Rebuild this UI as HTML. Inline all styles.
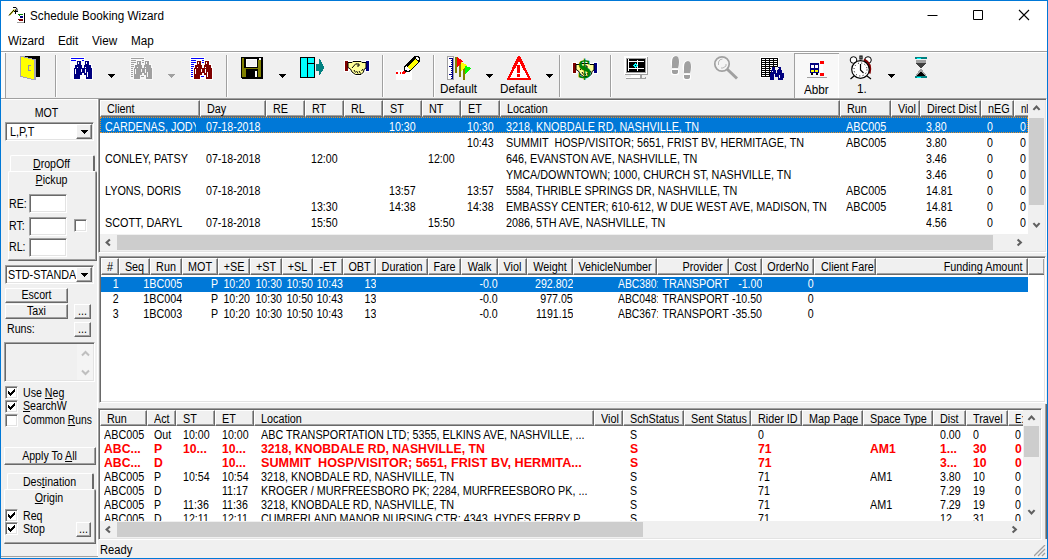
<!DOCTYPE html><html><head><meta charset="utf-8"><title>Schedule Booking Wizard</title><style>
*{box-sizing:border-box;margin:0;padding:0}
html,body{width:1048px;height:559px;overflow:hidden;background:#f0f0f0}
body{font-family:"Liberation Sans",sans-serif;font-size:11px;color:#000;position:relative;line-height:13px}
.abs,.abs>*{position:absolute}
div,span,svg{position:absolute}
.t{white-space:pre;height:13px;line-height:13px;font-size:12px;transform:scaleX(.885);transform-origin:0 0}
.t.k{transform:scaleX(.9)}
.t.red{transform:scaleX(1.02)}
.t.h{transform:scaleX(.9)}
.t.r{transform-origin:100% 0}
.t.c{transform-origin:50% 0}
.r{text-align:right}
.c{text-align:center}
.hd{background:#f0f0f0;border-top:1px solid #fff;border-left:1px solid #fff;border-right:1px solid #696969;border-bottom:1px solid #696969;box-shadow:inset -1px -1px 0 #a0a0a0;overflow:hidden;white-space:pre}
.hd i{position:absolute;font-style:normal;top:1px;left:5px;line-height:13px}
.fg{background:#f0f0f0;border-top:1px solid #fff;border-left:1px solid #fff;border-right:1px solid #696969;border-bottom:1px solid #696969;overflow:hidden;white-space:pre;box-shadow:inset -1px -1px 0 #a0a0a0}
.sel{background:#0078d7}
.w{color:#fff}
.red{color:#f00;font-weight:bold}
.btn{background:#f0f0f0;border-top:1px solid #fff;border-left:1px solid #fff;border-right:1px solid #696969;border-bottom:1px solid #696969;box-shadow:inset -1px -1px 0 #a0a0a0;text-align:center;white-space:pre}
.sunk{background:#fff;border-top:1px solid #a0a0a0;border-left:1px solid #a0a0a0;border-right:1px solid #fff;border-bottom:1px solid #fff;box-shadow:inset 1px 1px 0 #696969, inset -1px -1px 0 #e3e3e3}
.cb{background:#fff;border-top:1px solid #a0a0a0;border-left:1px solid #a0a0a0;border-right:1px solid #fff;border-bottom:1px solid #fff;box-shadow:inset 1px 1px 0 #696969, inset -1px -1px 0 #e3e3e3;width:13px;height:13px}
u{text-decoration:underline;text-underline-offset:1px}
.seg{font-size:12px;line-height:16px;white-space:pre;height:16px;transform:scaleX(.975);transform-origin:0 0}
</style></head><body>
<div class="" style="left:0px;top:0px;width:1048px;height:559px;background:#fff;border:1px solid #0078d7"></div>
<span class="seg" style="left:30px;top:8px">Schedule Booking Wizard</span>
<span class="seg" style="left:8px;top:33px">Wizard</span>
<span class="seg" style="left:58px;top:33px">Edit</span>
<span class="seg" style="left:92px;top:33px">View</span>
<span class="seg" style="left:131px;top:33px">Map</span>
<svg style="left:925px;top:8px" width="110" height="16" viewBox="0 0 110 16"><path d="M2.5 7.5h10" stroke="#000" fill="none"/><path d="M48.5 2.5h9v9h-9z" stroke="#000" fill="none"/><path d="M94 2l10 10M104 2l-10 10" stroke="#000" fill="none" stroke-width="1.1"/></svg>
<svg style="left:0;top:0" width="30" height="30" viewBox="0 0 30 30" shape-rendering="crispEdges"><path d="M9.500 15l5-5.500" stroke="#e8e800" stroke-width="1.600" fill="none" shape-rendering="auto"/><path d="M9 15.500l5-5.500M13 7.500h3q1.500 1 1 4M14 11.500h4M15.500 9.500v4.500" stroke="#000" stroke-width="1" fill="none" shape-rendering="auto"/><rect x="18" y="14" width="5" height="1" fill="#008000"/><rect x="19" y="15" width="1" height="1" fill="#008000"/><rect x="20" y="16" width="3" height="2" fill="#000080"/><rect x="18" y="19" width="5" height="1" fill="#800000"/><rect x="19" y="20" width="4" height="1" fill="#800000"/><rect x="24" y="13" width="1" height="10" fill="#000"/><rect x="17" y="22" width="7" height="1" fill="#a0a0a0"/></svg>
<div class="" style="left:1px;top:51px;width:1046px;height:507px;background:#f0f0f0"></div>
<div class="" style="left:1px;top:51px;width:1046px;height:1px;background:#a0a0a0"></div>
<div class="" style="left:1px;top:52px;width:1046px;height:1px;background:#fff"></div>
<div class="" style="left:1px;top:98px;width:1046px;height:1px;background:#a0a0a0"></div>
<div class="" style="left:1px;top:99px;width:1046px;height:1px;background:#fff"></div>
<svg style="left:0;top:0" width="1048" height="100" viewBox="0 0 1048 100" shape-rendering="crispEdges"><rect x="1" y="53" width="4" height="45" fill="#fafafa"/><rect x="5" y="53" width="1" height="45" fill="#a0a0a0"/><rect x="55" y="55" width="1" height="42" fill="#a0a0a0"/><rect x="56" y="55" width="1" height="42" fill="#fff"/><rect x="226" y="55" width="1" height="42" fill="#a0a0a0"/><rect x="227" y="55" width="1" height="42" fill="#fff"/><rect x="382" y="55" width="1" height="42" fill="#a0a0a0"/><rect x="383" y="55" width="1" height="42" fill="#fff"/><rect x="433" y="55" width="1" height="42" fill="#a0a0a0"/><rect x="434" y="55" width="1" height="42" fill="#fff"/><rect x="559" y="55" width="1" height="42" fill="#a0a0a0"/><rect x="560" y="55" width="1" height="42" fill="#fff"/><rect x="610" y="55" width="1" height="42" fill="#a0a0a0"/><rect x="611" y="55" width="1" height="42" fill="#fff"/><rect x="25" y="56" width="15" height="21" fill="#000"/><polygon points="20,56 25,56 25,57 28,57 28,58 32,58 32,59 36,59 36,80 31,80 31,79 27,79 27,78 23,78 23,77 20,77" fill="#a0a0b8" /><polygon points="21,57 24,57 24,58 28,58 28,59 32,59 32,60 34,60 34,79 31,79 31,78 27,78 27,77 23,77 23,76 21,76" fill="#ff0" /><rect x="28" y="65" width="1" height="6" fill="#9090a8"/><rect x="28" y="65" width="3" height="1" fill="#9090a8"/><rect x="28" y="70" width="3" height="1" fill="#9090a8"/><rect x="70" y="57" width="15" height="22" fill="#fff"/><rect x="71" y="58" width="13" height="1" fill="#00f"/><rect x="71" y="60" width="5" height="1" fill="#00f"/><rect x="82" y="60" width="2" height="1" fill="#00f"/><rect x="76" y="60" width="6" height="6" fill="#fff"/><rect x="84" y="60" width="6" height="6" fill="#fff"/><rect x="74" y="64" width="9" height="5" fill="#fff"/><rect x="83" y="64" width="9" height="5" fill="#fff"/><rect x="73" y="67" width="10" height="9" fill="#fff"/><rect x="83" y="67" width="10" height="9" fill="#fff"/><rect x="81" y="67" width="4" height="7" fill="#fff"/><rect x="73" y="74" width="8" height="6" fill="#fff"/><rect x="85" y="74" width="8" height="6" fill="#fff"/><rect x="77" y="61" width="4" height="4" fill="#000080"/><rect x="85" y="61" width="4" height="4" fill="#000080"/><rect x="75" y="65" width="7" height="3" fill="#000080"/><rect x="84" y="65" width="7" height="3" fill="#000080"/><rect x="74" y="68" width="8" height="7" fill="#000080"/><rect x="84" y="68" width="8" height="7" fill="#000080"/><rect x="82" y="68" width="2" height="5" fill="#000080"/><rect x="74" y="75" width="6" height="4" fill="#000080"/><rect x="86" y="75" width="6" height="4" fill="#000080"/><rect x="78" y="62" width="1" height="2" fill="#fff"/><rect x="86" y="62" width="1" height="2" fill="#fff"/><rect x="77" y="67" width="1" height="1" fill="#fff"/><rect x="85" y="67" width="1" height="1" fill="#fff"/><rect x="75" y="69" width="1" height="5" fill="#fff"/><rect x="81" y="69" width="1" height="3" fill="#fff"/><rect x="85" y="69" width="1" height="4" fill="#fff"/><rect x="87" y="72" width="1" height="5" fill="#fff"/><rect x="108" y="74" width="7" height="1" fill="#000"/><rect x="109" y="75" width="5" height="1" fill="#000"/><rect x="110" y="76" width="3" height="1" fill="#000"/><rect x="111" y="77" width="1" height="1" fill="#000"/><rect x="130" y="57" width="15" height="22" fill="#f8f8f8"/><rect x="131" y="58" width="13" height="1" fill="#a0a0a0"/><rect x="131" y="60" width="5" height="1" fill="#a0a0a0"/><rect x="142" y="60" width="2" height="1" fill="#a0a0a0"/><rect x="131" y="62" width="5" height="1" fill="#a0a0a0"/><rect x="142" y="62" width="2" height="1" fill="#a0a0a0"/><rect x="131" y="64" width="3" height="1" fill="#a0a0a0"/><rect x="131" y="66" width="3" height="1" fill="#a0a0a0"/><rect x="131" y="68" width="2" height="1" fill="#a0a0a0"/><rect x="131" y="70" width="2" height="1" fill="#a0a0a0"/><rect x="131" y="72" width="2" height="1" fill="#a0a0a0"/><rect x="131" y="74" width="2" height="1" fill="#a0a0a0"/><rect x="131" y="76" width="2" height="1" fill="#a0a0a0"/><rect x="141" y="76" width="3" height="1" fill="#a0a0a0"/><rect x="136" y="60" width="6" height="6" fill="#f8f8f8"/><rect x="144" y="60" width="6" height="6" fill="#f8f8f8"/><rect x="134" y="64" width="9" height="5" fill="#f8f8f8"/><rect x="143" y="64" width="9" height="5" fill="#f8f8f8"/><rect x="133" y="67" width="10" height="9" fill="#f8f8f8"/><rect x="143" y="67" width="10" height="9" fill="#f8f8f8"/><rect x="141" y="67" width="4" height="7" fill="#f8f8f8"/><rect x="133" y="74" width="8" height="6" fill="#f8f8f8"/><rect x="145" y="74" width="8" height="6" fill="#f8f8f8"/><rect x="137" y="61" width="4" height="4" fill="#a0a0a0"/><rect x="145" y="61" width="4" height="4" fill="#a0a0a0"/><rect x="135" y="65" width="7" height="3" fill="#a0a0a0"/><rect x="144" y="65" width="7" height="3" fill="#a0a0a0"/><rect x="134" y="68" width="8" height="7" fill="#a0a0a0"/><rect x="144" y="68" width="8" height="7" fill="#a0a0a0"/><rect x="142" y="68" width="2" height="5" fill="#a0a0a0"/><rect x="134" y="75" width="6" height="4" fill="#a0a0a0"/><rect x="146" y="75" width="6" height="4" fill="#a0a0a0"/><rect x="138" y="62" width="1" height="2" fill="#f8f8f8"/><rect x="146" y="62" width="1" height="2" fill="#f8f8f8"/><rect x="137" y="67" width="1" height="1" fill="#f8f8f8"/><rect x="145" y="67" width="1" height="1" fill="#f8f8f8"/><rect x="135" y="69" width="1" height="5" fill="#f8f8f8"/><rect x="141" y="69" width="1" height="3" fill="#f8f8f8"/><rect x="145" y="69" width="1" height="4" fill="#f8f8f8"/><rect x="147" y="72" width="1" height="5" fill="#f8f8f8"/><rect x="168" y="74" width="7" height="1" fill="#a0a0a0"/><rect x="169" y="75" width="5" height="1" fill="#a0a0a0"/><rect x="170" y="76" width="3" height="1" fill="#a0a0a0"/><rect x="171" y="77" width="1" height="1" fill="#a0a0a0"/><rect x="190" y="57" width="15" height="22" fill="#fff"/><rect x="191" y="58" width="13" height="1" fill="#00f"/><rect x="191" y="60" width="5" height="1" fill="#00f"/><rect x="202" y="60" width="2" height="1" fill="#00f"/><rect x="191" y="62" width="5" height="1" fill="#00f"/><rect x="202" y="62" width="2" height="1" fill="#00f"/><rect x="191" y="64" width="3" height="1" fill="#00f"/><rect x="191" y="66" width="3" height="1" fill="#00f"/><rect x="191" y="68" width="2" height="1" fill="#00f"/><rect x="191" y="70" width="2" height="1" fill="#00f"/><rect x="191" y="72" width="2" height="1" fill="#00f"/><rect x="191" y="74" width="2" height="1" fill="#00f"/><rect x="191" y="76" width="2" height="1" fill="#00f"/><rect x="201" y="76" width="3" height="1" fill="#00f"/><rect x="196" y="60" width="6" height="6" fill="#fff"/><rect x="204" y="60" width="6" height="6" fill="#fff"/><rect x="194" y="64" width="9" height="5" fill="#fff"/><rect x="203" y="64" width="9" height="5" fill="#fff"/><rect x="193" y="67" width="10" height="9" fill="#fff"/><rect x="203" y="67" width="10" height="9" fill="#fff"/><rect x="201" y="67" width="4" height="7" fill="#fff"/><rect x="193" y="74" width="8" height="6" fill="#fff"/><rect x="205" y="74" width="8" height="6" fill="#fff"/><rect x="197" y="61" width="4" height="4" fill="#800000"/><rect x="205" y="61" width="4" height="4" fill="#800000"/><rect x="195" y="65" width="7" height="3" fill="#800000"/><rect x="204" y="65" width="7" height="3" fill="#800000"/><rect x="194" y="68" width="8" height="7" fill="#800000"/><rect x="204" y="68" width="8" height="7" fill="#800000"/><rect x="202" y="68" width="2" height="5" fill="#800000"/><rect x="194" y="75" width="6" height="4" fill="#800000"/><rect x="206" y="75" width="6" height="4" fill="#800000"/><rect x="198" y="62" width="1" height="2" fill="#fff"/><rect x="206" y="62" width="1" height="2" fill="#fff"/><rect x="197" y="67" width="1" height="1" fill="#fff"/><rect x="205" y="67" width="1" height="1" fill="#fff"/><rect x="195" y="69" width="1" height="5" fill="#fff"/><rect x="201" y="69" width="1" height="3" fill="#fff"/><rect x="205" y="69" width="1" height="4" fill="#fff"/><rect x="207" y="72" width="1" height="5" fill="#fff"/><rect x="241" y="57" width="22" height="22" fill="#000"/><rect x="241" y="78" width="1" height="1" fill="#f0f0f0"/><rect x="242" y="58" width="2" height="19" fill="#808000"/><rect x="242" y="68" width="4" height="9" fill="#808000"/><rect x="258" y="60" width="3" height="17" fill="#808000"/><rect x="259" y="58" width="2" height="2" fill="#fff"/><rect x="244" y="68" width="14" height="1" fill="#808000"/><rect x="246" y="59" width="11" height="8" fill="#fff"/><rect x="247" y="60" width="9" height="6" fill="#f0f0f0"/><rect x="255" y="71" width="2" height="6" fill="#fff"/><rect x="279" y="74" width="7" height="1" fill="#000"/><rect x="280" y="75" width="5" height="1" fill="#000"/><rect x="281" y="76" width="3" height="1" fill="#000"/><rect x="282" y="77" width="1" height="1" fill="#000"/><rect x="300" y="57" width="15" height="21" fill="#000"/><rect x="301" y="58" width="6" height="19" fill="#0ff"/><rect x="308" y="58" width="6" height="5" fill="#0ff"/><rect x="308" y="64" width="6" height="13" fill="#0ff"/><rect x="316" y="64" width="3" height="7" fill="#008080"/><polygon points="319,59 320,59 324,67 324,68 320,75 319,75" fill="#008080" /><rect x="344" y="60" width="5" height="12" fill="#fff"/><rect x="365" y="60" width="5" height="12" fill="#fff"/><polygon points="348,62.5 352,62.5 353,61.5 361,61.5 362,62.5 366,62.5 366,68 364,69.5 363.5,72 361,74.5 355.5,74.5 352,72 350.5,69 348,67.5" fill="#fff" stroke="#fff" stroke-width="3" shape-rendering="auto"/><rect x="345" y="61" width="3" height="10" fill="#800000"/><rect x="366" y="61" width="3" height="10" fill="#000080"/><polygon points="348,62.5 352,62.5 353,61.5 361,61.5 362,62.5 366,62.5 366,68 364,69.5 363.5,72 361,74.5 355.5,74.5 352,72 350.5,69 348,67.5" fill="#ffff99" stroke="#000" stroke-width="1" shape-rendering="auto"/><path d="M352 68l4-4.500M356 64h3v2h-2M354 70l1.500 2.500M356.5 71l1.500 2.500M359 71l1.500 2.500M361.5 71l1.500-2" stroke="#000" stroke-width="1" fill="none" shape-rendering="auto"/><rect x="396" y="70" width="16" height="10" fill="#fff"/><rect x="396" y="72" width="2" height="2" fill="#f00"/><rect x="400" y="72" width="1" height="2" fill="#f00"/><rect x="402" y="72" width="2" height="2" fill="#f00"/><polygon points="403,73 403,71 405,70 406,71 406,72 404,74" fill="#f00" /><polygon points="404,66 414,56 418,56 420,58 420,61 409,72 405,72 404,70" fill="#000" /><polygon points="407,67 415,59 418,62 410,70" fill="#ff0" /><polygon points="405,67 407,66 410,70 408,71 405,70" fill="#fff" /><polygon points="415,58 417,57 419,59 418,61" fill="#fff" /><rect x="447" y="56" width="7" height="24" fill="#a0a0a0"/><rect x="448" y="57" width="5" height="22" fill="#fff"/><rect x="452" y="58" width="1" height="21" fill="#000080"/><rect x="449" y="58" width="3" height="1" fill="#000080"/><rect x="451" y="60" width="1" height="1" fill="#000080"/><rect x="451" y="62" width="1" height="1" fill="#000080"/><rect x="451" y="64" width="1" height="1" fill="#000080"/><rect x="449" y="66" width="3" height="1" fill="#000080"/><rect x="451" y="68" width="1" height="1" fill="#000080"/><rect x="451" y="70" width="1" height="1" fill="#000080"/><rect x="451" y="72" width="1" height="1" fill="#000080"/><rect x="449" y="74" width="3" height="1" fill="#000080"/><rect x="451" y="76" width="1" height="1" fill="#000080"/><rect x="451" y="78" width="1" height="1" fill="#000080"/><rect x="455" y="57" width="2" height="16" fill="#808000"/><rect x="459" y="64" width="2" height="13" fill="#808000"/><rect x="463" y="68" width="2" height="12" fill="#808000"/><polygon points="457,57 463,61 463,62 457,67" fill="#f00" /><polygon points="461,62 467,65 467,66 461,71" fill="#ff0" /><polygon points="465,66 471,68 471,69 465,74" fill="#0f0" /><rect x="486" y="74" width="7" height="1" fill="#000"/><rect x="487" y="75" width="5" height="1" fill="#000"/><rect x="488" y="76" width="3" height="1" fill="#000"/><rect x="489" y="77" width="1" height="1" fill="#000"/><polygon points="518,56 520,56 531,79 531,80 507,80 507,79" fill="#f00" /><polygon points="519,61 528,78 510,78" fill="#fff" /><rect x="517" y="65" width="3" height="8" fill="#f00"/><rect x="517" y="74" width="3" height="3" fill="#f00"/><rect x="546" y="74" width="7" height="1" fill="#000"/><rect x="547" y="75" width="5" height="1" fill="#000"/><rect x="548" y="76" width="3" height="1" fill="#000"/><rect x="549" y="77" width="1" height="1" fill="#000"/><rect x="572" y="62" width="5" height="12" fill="#fff"/><rect x="593" y="62" width="5" height="12" fill="#fff"/><polygon points="576,64.5 580,64.5 581,63.5 589,63.5 590,64.5 594,64.5 594,70 592,71.5 591.5,74 589,76.5 583.5,76.5 580,74 578.5,71 576,69.5" fill="#fff" stroke="#fff" stroke-width="3" shape-rendering="auto"/><rect x="573" y="63" width="3" height="10" fill="#800000"/><rect x="594" y="63" width="3" height="10" fill="#000080"/><polygon points="576,64.5 580,64.5 581,63.5 589,63.5 590,64.5 594,64.5 594,70 592,71.5 591.5,74 589,76.5 583.5,76.5 580,74 578.5,71 576,69.5" fill="#ffff99" stroke="#000" stroke-width="1" shape-rendering="auto"/><path d="M580 70l4-4.500M584 66h3v2h-2M582 72l1.500 2.500M584.5 73l1.500 2.500M587 73l1.500 2.500M589.5 73l1.500-2" stroke="#000" stroke-width="1" fill="none" shape-rendering="auto"/><text x="584.500" y="78" font-family="Liberation Serif,serif" font-weight="bold" font-size="27" fill="#008000" text-anchor="middle" style="text-rendering:geometricPrecision" shape-rendering="auto">$</text><rect x="624" y="56" width="24" height="19" fill="#fff"/><rect x="647" y="57" width="1" height="18" fill="#a0a0a0"/><rect x="625" y="74" width="23" height="1" fill="#a0a0a0"/><rect x="626" y="58" width="20" height="15" fill="#a0a0a0"/><rect x="627" y="59" width="18" height="13" fill="#000"/><rect x="628" y="61" width="16" height="1" fill="#fff"/><rect x="628" y="68" width="16" height="1" fill="#fff"/><rect x="628" y="59" width="1" height="12" fill="#fff"/><rect x="637" y="60" width="1" height="11" fill="#fff"/><rect x="635" y="63" width="1" height="5" fill="#0ff"/><rect x="633" y="65" width="5" height="1" fill="#0ff"/><rect x="634" y="64" width="3" height="3" fill="#0ff"/><rect x="635" y="65" width="1" height="1" fill="#000"/><rect x="631" y="75" width="9" height="3" fill="#fff"/><rect x="640" y="75" width="2" height="3" fill="#a0a0a0"/><rect x="626" y="77" width="5" height="1" fill="#fff"/><rect x="626" y="78" width="20" height="1" fill="#a0a0a0"/><rect x="645" y="77" width="1" height="1" fill="#a0a0a0"/><ellipse cx="675" cy="62" rx="4.500" ry="6.500" fill="#fff" shape-rendering="auto"/><path d="M672 68V62Q672 56 676 56Q679 56 679 62Q679 65 678 68Z" fill="#a0a0a0" shape-rendering="auto"/><rect x="671" y="69" width="8" height="6" rx="2" fill="#fff" shape-rendering="auto"/><path d="M672 70h6v2q0 2 -3 2q-3 0 -3-2z" fill="#a0a0a0" shape-rendering="auto"/><ellipse cx="687" cy="67" rx="4.500" ry="6.500" fill="#fff" shape-rendering="auto"/><path d="M684 73V67Q684 61 688 61Q691 61 691 67Q691 70 690 73Z" fill="#a0a0a0" shape-rendering="auto"/><rect x="683" y="74" width="8" height="6" rx="2" fill="#fff" shape-rendering="auto"/><path d="M684 75h6v2q0 2 -3 2q-3 0 -3-2z" fill="#a0a0a0" shape-rendering="auto"/><circle cx="722" cy="64" r="7.200" fill="#f4f4f4" stroke="#a0a0a0" stroke-width="1.700" shape-rendering="auto"/><path d="M718.500 65v-3q1-3 4-3M726 64v2l-3 2l-2 0" stroke="#b8b8b8" stroke-width="1" fill="none" shape-rendering="auto"/><path d="M727 69l10 9.500" stroke="#a0a0a0" stroke-width="3" fill="none" shape-rendering="auto"/><rect x="760" y="57" width="19" height="21" fill="#fff"/><rect x="761" y="58" width="17" height="19" fill="#000"/><rect x="762" y="59" width="3" height="1" fill="#fff"/><rect x="762" y="61" width="3" height="1" fill="#fff"/><rect x="762" y="63" width="3" height="1" fill="#fff"/><rect x="762" y="65" width="3" height="1" fill="#fff"/><rect x="762" y="67" width="3" height="1" fill="#fff"/><rect x="762" y="69" width="3" height="1" fill="#fff"/><rect x="762" y="71" width="3" height="1" fill="#fff"/><rect x="762" y="73" width="3" height="1" fill="#fff"/><rect x="762" y="75" width="3" height="1" fill="#fff"/><rect x="766" y="59" width="3" height="1" fill="#fff"/><rect x="766" y="61" width="3" height="1" fill="#fff"/><rect x="766" y="63" width="3" height="1" fill="#fff"/><rect x="766" y="65" width="3" height="1" fill="#fff"/><rect x="766" y="67" width="3" height="1" fill="#fff"/><rect x="766" y="69" width="3" height="1" fill="#fff"/><rect x="766" y="71" width="3" height="1" fill="#fff"/><rect x="766" y="73" width="3" height="1" fill="#fff"/><rect x="766" y="75" width="3" height="1" fill="#fff"/><rect x="770" y="59" width="3" height="1" fill="#fff"/><rect x="770" y="61" width="3" height="1" fill="#fff"/><rect x="770" y="63" width="3" height="1" fill="#fff"/><rect x="770" y="65" width="3" height="1" fill="#fff"/><rect x="770" y="67" width="3" height="1" fill="#fff"/><rect x="770" y="69" width="3" height="1" fill="#fff"/><rect x="770" y="71" width="3" height="1" fill="#fff"/><rect x="770" y="73" width="3" height="1" fill="#fff"/><rect x="770" y="75" width="3" height="1" fill="#fff"/><rect x="774" y="59" width="3" height="1" fill="#fff"/><rect x="774" y="61" width="3" height="1" fill="#fff"/><rect x="774" y="63" width="3" height="1" fill="#fff"/><rect x="774" y="65" width="3" height="1" fill="#fff"/><rect x="774" y="67" width="3" height="1" fill="#fff"/><rect x="774" y="69" width="3" height="1" fill="#fff"/><rect x="774" y="71" width="3" height="1" fill="#fff"/><rect x="774" y="73" width="3" height="1" fill="#fff"/><rect x="774" y="75" width="3" height="1" fill="#fff"/><rect x="771" y="67" width="13" height="14" fill="#f0f0f0"/><rect x="772" y="67" width="3" height="3" fill="#000080"/><rect x="778" y="67" width="3" height="3" fill="#000080"/><rect x="771" y="70" width="5" height="3" fill="#000080"/><rect x="777" y="70" width="5" height="3" fill="#000080"/><rect x="770" y="73" width="14" height="5" fill="#000080"/><rect x="770" y="78" width="4" height="2" fill="#000080"/><rect x="778" y="78" width="5" height="2" fill="#000080"/><rect x="774" y="74" width="1" height="3" fill="#f0f0f0"/><rect x="779" y="75" width="1" height="3" fill="#f0f0f0"/><rect x="774" y="77" width="4" height="3" fill="#f0f0f0"/><rect x="772" y="71" width="1" height="1" fill="#f0f0f0"/><rect x="778" y="68" width="1" height="1" fill="#f0f0f0"/><rect x="794" y="53" width="45" height="45" fill="#f8f8f8"/><rect x="794" y="53" width="45" height="1" fill="#a0a0a0"/><rect x="794" y="53" width="1" height="45" fill="#a0a0a0"/><rect x="838" y="54" width="1" height="44" fill="#fff"/><rect x="810" y="63" width="9" height="10" fill="#000080"/><rect x="811" y="65" width="3" height="3" fill="#fff"/><rect x="815" y="65" width="3" height="3" fill="#fff"/><rect x="811" y="70" width="3" height="2" fill="#ff0"/><rect x="815" y="70" width="3" height="2" fill="#ff0"/><rect x="811" y="73" width="2" height="2" fill="#000"/><rect x="816" y="73" width="2" height="2" fill="#000"/><rect x="820" y="61" width="4" height="3" fill="#f00"/><rect x="820" y="73" width="4" height="3" fill="#f00"/><rect x="820" y="64" width="3" height="9" fill="#fff"/><rect x="807" y="77" width="20" height="1" fill="#a0a0a0"/><circle cx="853.500" cy="60" r="3.300" fill="#fff" stroke="#000" stroke-width="1" shape-rendering="auto"/><circle cx="868" cy="60" r="3.300" fill="#fff" stroke="#000" stroke-width="1" shape-rendering="auto"/><path d="M864 59.500q8 4 5.500 14" stroke="#800000" stroke-width="2.200" fill="none" shape-rendering="auto"/><circle cx="860.500" cy="69.500" r="8.800" fill="#fff" stroke="#000" stroke-width="1.200" shape-rendering="auto"/><circle cx="860.500" cy="69.500" r="6.500" fill="none" stroke="#000" stroke-width="1" stroke-dasharray="1 2.400" shape-rendering="auto"/><path d="M860.500 64v6l3 3M860 56h2v3h-2zM854 76l-3.500 3M867 76l4 3" stroke="#000" stroke-width="1.200" fill="none" shape-rendering="auto"/><rect x="888" y="74" width="7" height="1" fill="#000"/><rect x="889" y="75" width="5" height="1" fill="#000"/><rect x="890" y="76" width="3" height="1" fill="#000"/><rect x="891" y="77" width="1" height="1" fill="#000"/><rect x="915" y="57" width="12" height="2" fill="#008080"/><rect x="917" y="58" width="4" height="1" fill="#0ff"/><rect x="915" y="76" width="12" height="2" fill="#008080"/><rect x="917" y="77" width="4" height="1" fill="#0ff"/><rect x="916" y="60" width="10" height="3" fill="#a0a0a0"/><polygon points="916,63 926,63 921,69" fill="#404040" /><polygon points="916,76 926,76 926,75 921,68 916,75" fill="#a0a0a0" /><polygon points="917,76 925,76 921,71" fill="#000" /></svg>
<span class="seg" style="left:440px;top:81px">Default</span>
<span class="seg" style="left:500px;top:81px">Default</span>
<span class="seg" style="left:804px;top:82px">Abbr</span>
<span class="seg" style="left:857px;top:81px">1.</span>
<div class="" style="left:97px;top:100px;width:1px;height:456px;background:#fff"></div>
<span class="t c" style="left:0px;top:107px;width:93px;">MOT</span>
<div class="sunk" style="left:5px;top:122px;width:89px;height:19px;background:#fff"></div>
<div class="" style="left:7px;top:124px;width:69px;height:15px;overflow:hidden"><span class="t k" style="left:3px;top:2px">L,P,T</span></div>
<div class="btn" style="left:76px;top:124px;width:16px;height:15px;"></div>
<svg style="left:81px;top:130px" width="7" height="4" viewBox="0 0 7 4" shape-rendering="crispEdges"><path d="M0 0h7v1h-1v1h-1v1h-1v1h-1v-1h-1v-1h-1v-1h-1z" fill="#000"/></svg>
<div class="" style="left:10px;top:155px;width:85px;height:17px;border-top:1px solid #fff;border-left:1px solid #fff;border-right:2px solid #696969;border-radius:2px 2px 0 0;background:#f0f0f0"></div>
<span class="t c" style="left:9px;top:158px;width:85px;"><u>D</u>ropOff</span>
<div class="" style="left:8px;top:171px;width:89px;height:90px;border-top:1px solid #fff;border-left:1px solid #fff;border-right:2px solid #696969;border-bottom:2px solid #696969;border-radius:2px 2px 0 0;background:#f0f0f0"></div>
<div class="" style="left:95px;top:172px;width:1px;height:88px;background:#a0a0a0"></div>
<div class="" style="left:9px;top:259px;width:87px;height:1px;background:#a0a0a0"></div>
<span class="t c" style="left:7px;top:174px;width:89px;"><u>P</u>ickup</span>
<span class="t " style="left:9px;top:198px;">RE:</span>
<div class="sunk" style="left:29px;top:194px;width:38px;height:19px;background:#fff"></div>
<span class="t " style="left:9px;top:220px;">RT:</span>
<div class="sunk" style="left:29px;top:217px;width:38px;height:19px;background:#fff"></div>
<span class="t " style="left:9px;top:241px;">RL:</span>
<div class="sunk" style="left:29px;top:238px;width:38px;height:19px;background:#fff"></div>
<div class="cb" style="left:74px;top:219px;width:13px;height:13px;"></div>
<div class="sunk" style="left:5px;top:265px;width:89px;height:19px;background:#fff"></div>
<div class="" style="left:7px;top:267px;width:69px;height:15px;overflow:hidden"><span class="t k" style="left:1px;top:2px">STD-STANDA</span></div>
<div class="btn" style="left:76px;top:267px;width:16px;height:15px;"></div>
<svg style="left:81px;top:273px" width="7" height="4" viewBox="0 0 7 4" shape-rendering="crispEdges"><path d="M0 0h7v1h-1v1h-1v1h-1v1h-1v-1h-1v-1h-1v-1h-1z" fill="#000"/></svg>
<div class="btn" style="left:5px;top:288px;width:63px;height:15px;"></div>
<span class="t c" style="left:5px;top:289px;width:63px;">Escort</span>
<div class="btn" style="left:5px;top:304px;width:63px;height:15px;"></div>
<span class="t c" style="left:5px;top:305px;width:63px;">Taxi</span>
<div class="btn" style="left:74px;top:304px;width:17px;height:15px;"></div>
<span class="t c" style="left:74px;top:305px;width:17px;">...</span>
<span class="t " style="left:7px;top:323px;">Runs:</span>
<div class="btn" style="left:74px;top:322px;width:17px;height:15px;"></div>
<span class="t c" style="left:74px;top:323px;width:17px;">...</span>
<div class="sunk" style="left:4px;top:342px;width:91px;height:40px;background:#f0f0f0"></div>
<div class="" style="left:77px;top:344px;width:16px;height:36px;background:#f4f4f4"></div>
<svg style="left:81px;top:350px" width="9" height="26" viewBox="0 0 9 26"><path d="M1 5.5l3.5-3.5l3.5 3.5M1 20.500l3.500 3.500l3.500-3.500" stroke="#bfbfbf" stroke-width="2" fill="none"/></svg>
<div class="cb" style="left:5px;top:386px;width:13px;height:13px;"></div>
<svg style="left:8px;top:389px" width="7" height="7" viewBox="0 0 7 7" shape-rendering="crispEdges"><path d="M0 2h1v1h1v1h1v-1h1v-1h1v-1h1v-1h1v3h-1v1h-1v1h-1v1h-1v1h-1v-1h-1v-1h-1z" fill="#000"/></svg>
<span class="t " style="left:23px;top:387px;">Use <u>N</u>eg</span>
<div class="cb" style="left:5px;top:400px;width:13px;height:13px;"></div>
<svg style="left:8px;top:403px" width="7" height="7" viewBox="0 0 7 7" shape-rendering="crispEdges"><path d="M0 2h1v1h1v1h1v-1h1v-1h1v-1h1v-1h1v3h-1v1h-1v1h-1v1h-1v1h-1v-1h-1v-1h-1z" fill="#000"/></svg>
<span class="t " style="left:23px;top:400px;"><u>S</u>earchW</span>
<div class="cb" style="left:5px;top:414px;width:13px;height:13px;"></div>
<span class="t " style="left:23px;top:414px;transform:scaleX(.86)">Common <u>R</u>uns</span>
<div class="btn" style="left:4px;top:447px;width:92px;height:18px;"></div>
<span class="t c" style="left:3px;top:450px;width:93px;">Apply To <u>A</u>ll</span>
<div class="" style="left:7px;top:473px;width:87px;height:17px;border-top:1px solid #fff;border-left:1px solid #fff;border-right:2px solid #696969;border-radius:2px 2px 0 0;background:#f0f0f0"></div>
<span class="t c" style="left:6px;top:476px;width:87px;">Des<u>t</u>ination</span>
<div class="" style="left:4px;top:489px;width:92px;height:55px;border-top:1px solid #fff;border-left:1px solid #fff;border-right:2px solid #696969;border-bottom:2px solid #696969;border-radius:2px 2px 0 0;background:#f0f0f0"></div>
<div class="" style="left:94px;top:490px;width:1px;height:53px;background:#a0a0a0"></div>
<div class="" style="left:5px;top:542px;width:90px;height:1px;background:#a0a0a0"></div>
<span class="t c" style="left:3px;top:492px;width:92px;"><u>O</u>rigin</span>
<div class="cb" style="left:5px;top:509px;width:13px;height:13px;"></div>
<svg style="left:8px;top:512px" width="7" height="7" viewBox="0 0 7 7" shape-rendering="crispEdges"><path d="M0 2h1v1h1v1h1v-1h1v-1h1v-1h1v-1h1v3h-1v1h-1v1h-1v1h-1v1h-1v-1h-1v-1h-1z" fill="#000"/></svg>
<span class="t " style="left:23px;top:510px;">Req</span>
<div class="cb" style="left:5px;top:522px;width:13px;height:13px;"></div>
<svg style="left:8px;top:525px" width="7" height="7" viewBox="0 0 7 7" shape-rendering="crispEdges"><path d="M0 2h1v1h1v1h1v-1h1v-1h1v-1h1v-1h1v3h-1v1h-1v1h-1v1h-1v1h-1v-1h-1v-1h-1z" fill="#000"/></svg>
<span class="t " style="left:23px;top:523px;">Stop</span>
<div class="btn" style="left:76px;top:522px;width:15px;height:15px;"></div>
<span class="t c" style="left:76px;top:523px;width:15px;">...</span>
<div class="" style="left:1px;top:556px;width:97px;height:1px;background:#a0a0a0"></div>
<div class="" style="left:98px;top:98px;width:949px;height:155px;background:#fff;border-top:1px solid #a0a0a0;border-left:1px solid #a0a0a0;border-right:1px solid #fff;border-bottom:1px solid #fff;box-shadow:inset 1px 1px 0 #696969, inset -1px -1px 0 #e3e3e3"></div>
<div style="left:100px;top:100px;width:928px;height:134px;overflow:hidden;background:#fff">
<div class="hd" style="left:0px;top:0;width:100px;height:17px"><span class="t h" style="left:5.500px;top:2px;">Client</span></div>
<div class="hd" style="left:100px;top:0;width:66px;height:17px"><span class="t h" style="left:5.500px;top:2px;">Day</span></div>
<div class="hd" style="left:166px;top:0;width:39px;height:17px"><span class="t h" style="left:5.500px;top:2px;">RE</span></div>
<div class="hd" style="left:205px;top:0;width:39px;height:17px"><span class="t h" style="left:5.500px;top:2px;">RT</span></div>
<div class="hd" style="left:244px;top:0;width:39px;height:17px"><span class="t h" style="left:5.500px;top:2px;">RL</span></div>
<div class="hd" style="left:283px;top:0;width:39px;height:17px"><span class="t h" style="left:5.500px;top:2px;">ST</span></div>
<div class="hd" style="left:322px;top:0;width:39px;height:17px"><span class="t h" style="left:5.500px;top:2px;">NT</span></div>
<div class="hd" style="left:361px;top:0;width:39px;height:17px"><span class="t h" style="left:5.500px;top:2px;">ET</span></div>
<div class="hd" style="left:400px;top:0;width:340px;height:17px"><span class="t h" style="left:5.500px;top:2px;">Location</span></div>
<div class="hd" style="left:740px;top:0;width:51px;height:17px"><span class="t h" style="left:5.500px;top:2px;">Run</span></div>
<div class="hd" style="left:791px;top:0;width:29px;height:17px"><span class="t h" style="left:5.500px;top:2px;">Viol</span></div>
<div class="hd" style="left:820px;top:0;width:61px;height:17px"><span class="t h" style="left:5.500px;top:2px;">Direct Dist</span></div>
<div class="hd" style="left:881px;top:0;width:33px;height:17px"><span class="t h" style="left:5.500px;top:2px;">nEG</span></div>
<div class="hd" style="left:914px;top:0;width:46px;height:17px"><span class="t h" style="left:5.500px;top:2px;transform:scaleX(.8)">nl</span></div>
<div class="sel" style="left:0;top:17px;width:928px;height:16px;outline:1px dotted #e8902a;outline-offset:-1px"></div>
<div style="left:0px;top:17px;width:96px;height:16px;overflow:hidden"><span class="t w k" style="left:5px;top:4px">CARDENAS, JODY</span></div>
<div style="left:100px;top:17px;width:66px;height:16px;overflow:hidden"><span class="t w" style="left:5.5px;top:4px">07-18-2018</span></div>
<div style="left:283px;top:17px;width:39px;height:16px;overflow:hidden"><span class="t w" style="left:5.5px;top:4px">10:30</span></div>
<div style="left:361px;top:17px;width:39px;height:16px;overflow:hidden"><span class="t w" style="left:5.5px;top:4px">10:30</span></div>
<div style="left:400px;top:17px;width:340px;height:16px;overflow:hidden"><span class="t w k" style="left:5.5px;top:4px">3218, KNOBDALE RD, NASHVILLE, TN</span></div>
<div style="left:740px;top:17px;width:51px;height:16px;overflow:hidden"><span class="t w k" style="left:5.5px;top:4px">ABC005</span></div>
<div style="left:820px;top:17px;width:61px;height:16px;overflow:hidden"><span class="t w" style="left:5.5px;top:4px">3.80</span></div>
<div style="left:881px;top:17px;width:33px;height:16px;overflow:hidden"><span class="t w" style="left:5.5px;top:4px">0</span></div>
<div style="left:914px;top:17px;width:14px;height:16px;overflow:hidden"><span class="t w" style="left:5.5px;top:4px">0</span></div>
<div style="left:361px;top:33px;width:39px;height:16px;overflow:hidden"><span class="t" style="left:5.5px;top:4px">10:43</span></div>
<div style="left:400px;top:33px;width:340px;height:16px;overflow:hidden"><span class="t k" style="left:5.5px;top:4px">SUMMIT  HOSP/VISITOR; 5651, FRIST BV, HERMITAGE, TN</span></div>
<div style="left:740px;top:33px;width:51px;height:16px;overflow:hidden"><span class="t k" style="left:5.5px;top:4px">ABC005</span></div>
<div style="left:820px;top:33px;width:61px;height:16px;overflow:hidden"><span class="t" style="left:5.5px;top:4px">3.80</span></div>
<div style="left:881px;top:33px;width:33px;height:16px;overflow:hidden"><span class="t" style="left:5.5px;top:4px">0</span></div>
<div style="left:914px;top:33px;width:14px;height:16px;overflow:hidden"><span class="t" style="left:5.5px;top:4px">0</span></div>
<div style="left:0px;top:49px;width:96px;height:16px;overflow:hidden"><span class="t k" style="left:5px;top:4px">CONLEY, PATSY</span></div>
<div style="left:100px;top:49px;width:66px;height:16px;overflow:hidden"><span class="t" style="left:5.5px;top:4px">07-18-2018</span></div>
<div style="left:205px;top:49px;width:39px;height:16px;overflow:hidden"><span class="t" style="left:5.5px;top:4px">12:00</span></div>
<div style="left:322px;top:49px;width:39px;height:16px;overflow:hidden"><span class="t" style="left:5.5px;top:4px">12:00</span></div>
<div style="left:400px;top:49px;width:340px;height:16px;overflow:hidden"><span class="t k" style="left:5.5px;top:4px">646, EVANSTON AVE, NASHVILLE, TN</span></div>
<div style="left:820px;top:49px;width:61px;height:16px;overflow:hidden"><span class="t" style="left:5.5px;top:4px">3.46</span></div>
<div style="left:881px;top:49px;width:33px;height:16px;overflow:hidden"><span class="t" style="left:5.5px;top:4px">0</span></div>
<div style="left:914px;top:49px;width:14px;height:16px;overflow:hidden"><span class="t" style="left:5.5px;top:4px">0</span></div>
<div style="left:400px;top:65px;width:340px;height:16px;overflow:hidden"><span class="t k" style="left:5.5px;top:4px">YMCA/DOWNTOWN; 1000, CHURCH ST, NASHVILLE, TN</span></div>
<div style="left:820px;top:65px;width:61px;height:16px;overflow:hidden"><span class="t" style="left:5.5px;top:4px">3.46</span></div>
<div style="left:881px;top:65px;width:33px;height:16px;overflow:hidden"><span class="t" style="left:5.5px;top:4px">0</span></div>
<div style="left:914px;top:65px;width:14px;height:16px;overflow:hidden"><span class="t" style="left:5.5px;top:4px">0</span></div>
<div style="left:0px;top:81px;width:96px;height:16px;overflow:hidden"><span class="t k" style="left:5px;top:4px">LYONS, DORIS</span></div>
<div style="left:100px;top:81px;width:66px;height:16px;overflow:hidden"><span class="t" style="left:5.5px;top:4px">07-18-2018</span></div>
<div style="left:283px;top:81px;width:39px;height:16px;overflow:hidden"><span class="t" style="left:5.5px;top:4px">13:57</span></div>
<div style="left:361px;top:81px;width:39px;height:16px;overflow:hidden"><span class="t" style="left:5.5px;top:4px">13:57</span></div>
<div style="left:400px;top:81px;width:340px;height:16px;overflow:hidden"><span class="t k" style="left:5.5px;top:4px">5584, THRIBLE SPRINGS DR, NASHVILLE, TN</span></div>
<div style="left:740px;top:81px;width:51px;height:16px;overflow:hidden"><span class="t k" style="left:5.5px;top:4px">ABC005</span></div>
<div style="left:820px;top:81px;width:61px;height:16px;overflow:hidden"><span class="t" style="left:5.5px;top:4px">14.81</span></div>
<div style="left:881px;top:81px;width:33px;height:16px;overflow:hidden"><span class="t" style="left:5.5px;top:4px">0</span></div>
<div style="left:914px;top:81px;width:14px;height:16px;overflow:hidden"><span class="t" style="left:5.5px;top:4px">0</span></div>
<div style="left:205px;top:97px;width:39px;height:16px;overflow:hidden"><span class="t" style="left:5.5px;top:4px">13:30</span></div>
<div style="left:283px;top:97px;width:39px;height:16px;overflow:hidden"><span class="t" style="left:5.5px;top:4px">14:38</span></div>
<div style="left:361px;top:97px;width:39px;height:16px;overflow:hidden"><span class="t" style="left:5.5px;top:4px">14:38</span></div>
<div style="left:400px;top:97px;width:340px;height:16px;overflow:hidden"><span class="t k" style="left:5.5px;top:4px">EMBASSY CENTER; 610-612, W DUE WEST AVE, MADISON, TN</span></div>
<div style="left:740px;top:97px;width:51px;height:16px;overflow:hidden"><span class="t k" style="left:5.5px;top:4px">ABC005</span></div>
<div style="left:820px;top:97px;width:61px;height:16px;overflow:hidden"><span class="t" style="left:5.5px;top:4px">14.81</span></div>
<div style="left:881px;top:97px;width:33px;height:16px;overflow:hidden"><span class="t" style="left:5.5px;top:4px">0</span></div>
<div style="left:914px;top:97px;width:14px;height:16px;overflow:hidden"><span class="t" style="left:5.5px;top:4px">0</span></div>
<div style="left:0px;top:113px;width:96px;height:16px;overflow:hidden"><span class="t k" style="left:5px;top:4px">SCOTT, DARYL</span></div>
<div style="left:100px;top:113px;width:66px;height:16px;overflow:hidden"><span class="t" style="left:5.5px;top:4px">07-18-2018</span></div>
<div style="left:205px;top:113px;width:39px;height:16px;overflow:hidden"><span class="t" style="left:5.5px;top:4px">15:50</span></div>
<div style="left:322px;top:113px;width:39px;height:16px;overflow:hidden"><span class="t" style="left:5.5px;top:4px">15:50</span></div>
<div style="left:400px;top:113px;width:340px;height:16px;overflow:hidden"><span class="t k" style="left:5.5px;top:4px">2086, 5TH AVE, NASHVILLE, TN</span></div>
<div style="left:820px;top:113px;width:61px;height:16px;overflow:hidden"><span class="t" style="left:5.5px;top:4px">4.56</span></div>
<div style="left:881px;top:113px;width:33px;height:16px;overflow:hidden"><span class="t" style="left:5.5px;top:4px">0</span></div>
<div style="left:914px;top:113px;width:14px;height:16px;overflow:hidden"><span class="t" style="left:5.5px;top:4px">0</span></div>
</div>
<div class="" style="left:1028px;top:100px;width:17px;height:134px;background:#f0f0f0"></div>
<div class="" style="left:1029px;top:118px;width:15px;height:87px;background:#cdcdcd"></div>
<svg style="left:1032px;top:104px" width="9" height="8" viewBox="0 0 9 8"><path d="M1.400 5.900L4.500 2.600L7.600 5.900" stroke="#606060" stroke-width="2.100" fill="none"/></svg>
<svg style="left:1032px;top:221px" width="9" height="8" viewBox="0 0 9 8"><path d="M1.400 2.100L4.500 5.400L7.600 2.100" stroke="#606060" stroke-width="2.100" fill="none"/></svg>
<div class="" style="left:100px;top:234px;width:928px;height:17px;background:#f0f0f0"></div>
<div class="" style="left:117px;top:235px;width:876px;height:15px;background:#cdcdcd"></div>
<svg style="left:104px;top:237.5px" width="8" height="9" viewBox="0 0 8 9"><path d="M5.900 1.400L2.600 4.500L5.900 7.600" stroke="#606060" stroke-width="2.100" fill="none"/></svg>
<svg style="left:1016px;top:237.5px" width="8" height="9" viewBox="0 0 8 9"><path d="M1.600 1.400L4.900 4.500L1.600 7.600" stroke="#606060" stroke-width="2.100" fill="none"/></svg>
<div class="" style="left:1028px;top:234px;width:17px;height:17px;background:#f0f0f0"></div>
<div class="" style="left:99px;top:256px;width:947px;height:147px;background:#fff;border-top:1px solid #a0a0a0;border-left:1px solid #a0a0a0;border-right:1px solid #fff;border-bottom:1px solid #fff;box-shadow:inset 1px 1px 0 #696969, inset -1px -1px 0 #e3e3e3"></div>
<div style="left:101px;top:258px;width:943px;height:143px;overflow:hidden;background:#fff">
<div style="left:0;top:0;width:943px;height:17px;background:#f0f0f0"></div>
<div class="fg" style="left:0px;top:0;width:18px;height:17px"><span class="t c h" style="left:0;top:2px;width:16px">#</span></div>
<div class="fg" style="left:18px;top:0;width:31px;height:17px"><span class="t c h" style="left:0;top:2px;width:29px">Seq</span></div>
<div class="fg" style="left:49px;top:0;width:32px;height:17px"><span class="t c h" style="left:0;top:2px;width:30px">Run</span></div>
<div class="fg" style="left:81px;top:0;width:36px;height:17px"><span class="t c h" style="left:0;top:2px;width:34px">MOT</span></div>
<div class="fg" style="left:117px;top:0;width:32px;height:17px"><span class="t c h" style="left:0;top:2px;width:30px">+SE</span></div>
<div class="fg" style="left:149px;top:0;width:32px;height:17px"><span class="t c h" style="left:0;top:2px;width:30px">+ST</span></div>
<div class="fg" style="left:181px;top:0;width:31px;height:17px"><span class="t c h" style="left:0;top:2px;width:29px">+SL</span></div>
<div class="fg" style="left:212px;top:0;width:30px;height:17px"><span class="t c h" style="left:0;top:2px;width:28px">-ET</span></div>
<div class="fg" style="left:242px;top:0;width:33px;height:17px"><span class="t c h" style="left:0;top:2px;width:31px">OBT</span></div>
<div class="fg" style="left:275px;top:0;width:52px;height:17px"><span class="t c h" style="left:0;top:2px;width:50px">Duration</span></div>
<div class="fg" style="left:327px;top:0;width:33px;height:17px"><span class="t c h" style="left:0;top:2px;width:31px">Fare</span></div>
<div class="fg" style="left:360px;top:0;width:37px;height:17px"><span class="t c h" style="left:0;top:2px;width:35px">Walk</span></div>
<div class="fg" style="left:397px;top:0;width:29px;height:17px"><span class="t c h" style="left:0;top:2px;width:27px">Viol</span></div>
<div class="fg" style="left:426px;top:0;width:46px;height:17px"><span class="t c h" style="left:0;top:2px;width:44px">Weight</span></div>
<div class="fg" style="left:472px;top:0;width:84px;height:17px"><span class="t c h" style="left:0;top:2px;width:82px">VehicleNumber</span></div>
<div class="fg" style="left:556px;top:0;width:72px;height:17px"><span class="t r h" style="right:5px;top:2px">Provider</span></div>
<div class="fg" style="left:628px;top:0;width:33px;height:17px"><span class="t c h" style="left:0;top:2px;width:31px">Cost</span></div>
<div class="fg" style="left:661px;top:0;width:52px;height:17px"><span class="t c h" style="left:0;top:2px;width:50px">OrderNo</span></div>
<div class="fg" style="left:713px;top:0;width:62px;height:17px"><span class="t h" style="left:5.500px;top:2px">Client Fare</span></div>
<div class="fg" style="left:775px;top:0;width:152px;height:17px"><span class="t r h" style="right:5px;top:2px">Funding Amount</span></div>
<div class="fg" style="left:927px;top:0;width:17px;height:17px"><span class="t c h" style="left:0;top:2px;width:15px"></span></div>
<div class="sel" style="left:0;top:19px;width:927px;height:15px"></div>
<div style="left:-1px;top:19px;width:19px;height:15px;overflow:hidden"><span class="t r w" style="right:0px;top:1px">1</span></div>
<div style="left:41px;top:19px;width:40px;height:15px;overflow:hidden"><span class="t r w k" style="right:0px;top:1px">1BC005</span></div>
<div style="left:81px;top:19px;width:36px;height:15px;overflow:hidden"><span class="t r w" style="right:0px;top:1px">P</span></div>
<div style="left:117px;top:19px;width:32px;height:15px;overflow:hidden"><span class="t r w" style="right:0px;top:1px">10:20</span></div>
<div style="left:149px;top:19px;width:32px;height:15px;overflow:hidden"><span class="t r w" style="right:0px;top:1px">10:30</span></div>
<div style="left:181px;top:19px;width:31px;height:15px;overflow:hidden"><span class="t r w" style="right:0px;top:1px">10:50</span></div>
<div style="left:212px;top:19px;width:30px;height:15px;overflow:hidden"><span class="t r w" style="right:0px;top:1px">10:43</span></div>
<div style="left:242px;top:19px;width:33px;height:15px;overflow:hidden"><span class="t r w" style="right:0px;top:1px">13</span></div>
<div style="left:360px;top:19px;width:37px;height:15px;overflow:hidden"><span class="t r w" style="right:0px;top:1px">-0.0</span></div>
<div style="left:426px;top:19px;width:46px;height:15px;overflow:hidden"><span class="t r w" style="right:0px;top:1px">292.802</span></div>
<div style="left:472px;top:19px;width:85px;height:15px;overflow:hidden"><span class="t w" style="left:45px;top:1px;transform:scaleX(.86)">ABC380:</span></div>
<div style="left:556px;top:19px;width:72px;height:15px;overflow:hidden"><span class="t r w k" style="right:0px;top:1px">TRANSPORT</span></div>
<div style="left:628px;top:19px;width:33px;height:15px;overflow:hidden"><span class="t r w" style="right:0px;top:1px">-1.00</span></div>
<div style="left:661px;top:19px;width:52px;height:15px;overflow:hidden"><span class="t r w" style="right:0px;top:1px">0</span></div>
<div style="left:-1px;top:34px;width:19px;height:15px;overflow:hidden"><span class="t r" style="right:0px;top:1px">2</span></div>
<div style="left:41px;top:34px;width:40px;height:15px;overflow:hidden"><span class="t r k" style="right:0px;top:1px">1BC004</span></div>
<div style="left:81px;top:34px;width:36px;height:15px;overflow:hidden"><span class="t r" style="right:0px;top:1px">P</span></div>
<div style="left:117px;top:34px;width:32px;height:15px;overflow:hidden"><span class="t r" style="right:0px;top:1px">10:20</span></div>
<div style="left:149px;top:34px;width:32px;height:15px;overflow:hidden"><span class="t r" style="right:0px;top:1px">10:30</span></div>
<div style="left:181px;top:34px;width:31px;height:15px;overflow:hidden"><span class="t r" style="right:0px;top:1px">10:50</span></div>
<div style="left:212px;top:34px;width:30px;height:15px;overflow:hidden"><span class="t r" style="right:0px;top:1px">10:43</span></div>
<div style="left:242px;top:34px;width:33px;height:15px;overflow:hidden"><span class="t r" style="right:0px;top:1px">13</span></div>
<div style="left:360px;top:34px;width:37px;height:15px;overflow:hidden"><span class="t r" style="right:0px;top:1px">-0.0</span></div>
<div style="left:426px;top:34px;width:46px;height:15px;overflow:hidden"><span class="t r" style="right:0px;top:1px">977.05</span></div>
<div style="left:472px;top:34px;width:85px;height:15px;overflow:hidden"><span class="t" style="left:45px;top:1px;transform:scaleX(.86)">ABC048:</span></div>
<div style="left:556px;top:34px;width:72px;height:15px;overflow:hidden"><span class="t r k" style="right:0px;top:1px">TRANSPORT</span></div>
<div style="left:628px;top:34px;width:33px;height:15px;overflow:hidden"><span class="t r" style="right:0px;top:1px">-10.50</span></div>
<div style="left:661px;top:34px;width:52px;height:15px;overflow:hidden"><span class="t r" style="right:0px;top:1px">0</span></div>
<div style="left:-1px;top:49px;width:19px;height:15px;overflow:hidden"><span class="t r" style="right:0px;top:1px">3</span></div>
<div style="left:41px;top:49px;width:40px;height:15px;overflow:hidden"><span class="t r k" style="right:0px;top:1px">1BC003</span></div>
<div style="left:81px;top:49px;width:36px;height:15px;overflow:hidden"><span class="t r" style="right:0px;top:1px">P</span></div>
<div style="left:117px;top:49px;width:32px;height:15px;overflow:hidden"><span class="t r" style="right:0px;top:1px">10:20</span></div>
<div style="left:149px;top:49px;width:32px;height:15px;overflow:hidden"><span class="t r" style="right:0px;top:1px">10:30</span></div>
<div style="left:181px;top:49px;width:31px;height:15px;overflow:hidden"><span class="t r" style="right:0px;top:1px">10:50</span></div>
<div style="left:212px;top:49px;width:30px;height:15px;overflow:hidden"><span class="t r" style="right:0px;top:1px">10:43</span></div>
<div style="left:242px;top:49px;width:33px;height:15px;overflow:hidden"><span class="t r" style="right:0px;top:1px">13</span></div>
<div style="left:360px;top:49px;width:37px;height:15px;overflow:hidden"><span class="t r" style="right:0px;top:1px">-0.0</span></div>
<div style="left:426px;top:49px;width:46px;height:15px;overflow:hidden"><span class="t r" style="right:0px;top:1px">1191.15</span></div>
<div style="left:472px;top:49px;width:85px;height:15px;overflow:hidden"><span class="t" style="left:45px;top:1px;transform:scaleX(.86)">ABC367:</span></div>
<div style="left:556px;top:49px;width:72px;height:15px;overflow:hidden"><span class="t r k" style="right:0px;top:1px">TRANSPORT</span></div>
<div style="left:628px;top:49px;width:33px;height:15px;overflow:hidden"><span class="t r" style="right:0px;top:1px">-35.50</span></div>
<div style="left:661px;top:49px;width:52px;height:15px;overflow:hidden"><span class="t r" style="right:0px;top:1px">0</span></div>
</div>
<div class="" style="left:98px;top:408px;width:944px;height:132px;background:#fff;border-top:1px solid #a0a0a0;border-left:1px solid #a0a0a0;border-right:1px solid #fff;border-bottom:1px solid #fff;box-shadow:inset 1px 1px 0 #696969, inset -1px -1px 0 #e3e3e3"></div>
<div style="left:100px;top:410px;width:923px;height:111px;overflow:hidden;background:#fff">
<div class="hd" style="left:0px;top:0;width:47px;height:16px"><span class="t h" style="left:5.500px;top:2px;">Run</span></div>
<div class="hd" style="left:47px;top:0;width:29px;height:16px"><span class="t h" style="left:5.500px;top:2px;">Act</span></div>
<div class="hd" style="left:76px;top:0;width:39px;height:16px"><span class="t h" style="left:5.500px;top:2px;">ST</span></div>
<div class="hd" style="left:115px;top:0;width:39px;height:16px"><span class="t h" style="left:5.500px;top:2px;">ET</span></div>
<div class="hd" style="left:154px;top:0;width:340px;height:16px"><span class="t h" style="left:5.500px;top:2px;">Location</span></div>
<div class="hd" style="left:494px;top:0;width:29px;height:16px"><span class="t h" style="left:5.500px;top:2px;">Viol</span></div>
<div class="hd" style="left:523px;top:0;width:61px;height:16px"><span class="t h" style="left:5.500px;top:2px;">SchStatus</span></div>
<div class="hd" style="left:584px;top:0;width:67px;height:16px"><span class="t h" style="left:5.500px;top:2px;">Sent Status</span></div>
<div class="hd" style="left:651px;top:0;width:51px;height:16px"><span class="t h" style="left:5.500px;top:2px;">Rider ID</span></div>
<div class="hd" style="left:702px;top:0;width:61px;height:16px"><span class="t h" style="left:5.500px;top:2px;">Map Page</span></div>
<div class="hd" style="left:763px;top:0;width:70px;height:16px"><span class="t h" style="left:5.500px;top:2px;">Space Type</span></div>
<div class="hd" style="left:833px;top:0;width:33px;height:16px"><span class="t h" style="left:5.500px;top:2px;">Dist</span></div>
<div class="hd" style="left:866px;top:0;width:42px;height:16px"><span class="t h" style="left:5.500px;top:2px;">Travel</span></div>
<div class="hd" style="left:908px;top:0;width:52px;height:16px"><span class="t h" style="left:5.500px;top:2px;transform:scaleX(.8)">E:</span></div>
<div style="left:0px;top:17px;width:47px;height:14px;overflow:hidden"><span class="t k" style="left:4px;top:2px;">ABC005</span></div>
<div style="left:47px;top:17px;width:29px;height:14px;overflow:hidden"><span class="t" style="left:7px;top:2px;">Out</span></div>
<div style="left:76px;top:17px;width:39px;height:14px;overflow:hidden"><span class="t" style="left:7px;top:2px;">10:00</span></div>
<div style="left:115px;top:17px;width:39px;height:14px;overflow:hidden"><span class="t" style="left:7px;top:2px;">10:00</span></div>
<div style="left:154px;top:17px;width:340px;height:14px;overflow:hidden"><span class="t k" style="left:7px;top:2px;">ABC TRANSPORTATION LTD; 5355, ELKINS AVE, NASHVILLE, ...</span></div>
<div style="left:523px;top:17px;width:61px;height:14px;overflow:hidden"><span class="t" style="left:7px;top:2px;">S</span></div>
<div style="left:651px;top:17px;width:51px;height:14px;overflow:hidden"><span class="t" style="left:7px;top:2px;">0</span></div>
<div style="left:833px;top:17px;width:33px;height:14px;overflow:hidden"><span class="t" style="left:7px;top:2px;">0.00</span></div>
<div style="left:866px;top:17px;width:42px;height:14px;overflow:hidden"><span class="t" style="left:7px;top:2px;">0</span></div>
<div style="left:908px;top:17px;width:15px;height:14px;overflow:hidden"><span class="t" style="left:7px;top:2px;">0</span></div>
<div style="left:0px;top:31px;width:47px;height:14px;overflow:hidden"><span class="t red" style="left:4px;top:2px;">ABC...</span></div>
<div style="left:47px;top:31px;width:29px;height:14px;overflow:hidden"><span class="t red" style="left:7px;top:2px;">P</span></div>
<div style="left:76px;top:31px;width:39px;height:14px;overflow:hidden"><span class="t red" style="left:7px;top:2px;">10...</span></div>
<div style="left:115px;top:31px;width:39px;height:14px;overflow:hidden"><span class="t red" style="left:7px;top:2px;">10...</span></div>
<div style="left:154px;top:31px;width:340px;height:14px;overflow:hidden"><span class="t red" style="left:7px;top:2px;">3218, KNOBDALE RD, NASHVILLE, TN</span></div>
<div style="left:523px;top:31px;width:61px;height:14px;overflow:hidden"><span class="t red" style="left:7px;top:2px;">S</span></div>
<div style="left:651px;top:31px;width:51px;height:14px;overflow:hidden"><span class="t red" style="left:7px;top:2px;">71</span></div>
<div style="left:763px;top:31px;width:70px;height:14px;overflow:hidden"><span class="t red" style="left:7px;top:2px;">AM1</span></div>
<div style="left:833px;top:31px;width:33px;height:14px;overflow:hidden"><span class="t red" style="left:7px;top:2px;">1...</span></div>
<div style="left:866px;top:31px;width:42px;height:14px;overflow:hidden"><span class="t red" style="left:7px;top:2px;">30</span></div>
<div style="left:908px;top:31px;width:15px;height:14px;overflow:hidden"><span class="t red" style="left:7px;top:2px;">0</span></div>
<div style="left:0px;top:45px;width:47px;height:14px;overflow:hidden"><span class="t red" style="left:4px;top:2px;">ABC...</span></div>
<div style="left:47px;top:45px;width:29px;height:14px;overflow:hidden"><span class="t red" style="left:7px;top:2px;">D</span></div>
<div style="left:115px;top:45px;width:39px;height:14px;overflow:hidden"><span class="t red" style="left:7px;top:2px;">10...</span></div>
<div style="left:154px;top:45px;width:340px;height:14px;overflow:hidden"><span class="t red" style="left:7px;top:2px;transform:scaleX(1.056);">SUMMIT  HOSP/VISITOR; 5651, FRIST BV, HERMITA...</span></div>
<div style="left:523px;top:45px;width:61px;height:14px;overflow:hidden"><span class="t red" style="left:7px;top:2px;">S</span></div>
<div style="left:651px;top:45px;width:51px;height:14px;overflow:hidden"><span class="t red" style="left:7px;top:2px;">71</span></div>
<div style="left:833px;top:45px;width:33px;height:14px;overflow:hidden"><span class="t red" style="left:7px;top:2px;">3...</span></div>
<div style="left:866px;top:45px;width:42px;height:14px;overflow:hidden"><span class="t red" style="left:7px;top:2px;">10</span></div>
<div style="left:908px;top:45px;width:15px;height:14px;overflow:hidden"><span class="t red" style="left:7px;top:2px;">0</span></div>
<div style="left:0px;top:59px;width:47px;height:14px;overflow:hidden"><span class="t k" style="left:4px;top:2px;">ABC005</span></div>
<div style="left:47px;top:59px;width:29px;height:14px;overflow:hidden"><span class="t" style="left:7px;top:2px;">P</span></div>
<div style="left:76px;top:59px;width:39px;height:14px;overflow:hidden"><span class="t" style="left:7px;top:2px;">10:54</span></div>
<div style="left:115px;top:59px;width:39px;height:14px;overflow:hidden"><span class="t" style="left:7px;top:2px;">10:54</span></div>
<div style="left:154px;top:59px;width:340px;height:14px;overflow:hidden"><span class="t k" style="left:7px;top:2px;">3218, KNOBDALE RD, NASHVILLE, TN</span></div>
<div style="left:523px;top:59px;width:61px;height:14px;overflow:hidden"><span class="t" style="left:7px;top:2px;">S</span></div>
<div style="left:651px;top:59px;width:51px;height:14px;overflow:hidden"><span class="t" style="left:7px;top:2px;">71</span></div>
<div style="left:763px;top:59px;width:70px;height:14px;overflow:hidden"><span class="t k" style="left:7px;top:2px;">AM1</span></div>
<div style="left:833px;top:59px;width:33px;height:14px;overflow:hidden"><span class="t" style="left:7px;top:2px;">3.80</span></div>
<div style="left:866px;top:59px;width:42px;height:14px;overflow:hidden"><span class="t" style="left:7px;top:2px;">10</span></div>
<div style="left:908px;top:59px;width:15px;height:14px;overflow:hidden"><span class="t" style="left:7px;top:2px;">0</span></div>
<div style="left:0px;top:73px;width:47px;height:14px;overflow:hidden"><span class="t k" style="left:4px;top:2px;">ABC005</span></div>
<div style="left:47px;top:73px;width:29px;height:14px;overflow:hidden"><span class="t" style="left:7px;top:2px;">D</span></div>
<div style="left:115px;top:73px;width:39px;height:14px;overflow:hidden"><span class="t" style="left:7px;top:2px;">11:17</span></div>
<div style="left:154px;top:73px;width:340px;height:14px;overflow:hidden"><span class="t k" style="left:7px;top:2px;">KROGER / MURFREESBORO PK; 2284, MURFREESBORO PK, ...</span></div>
<div style="left:523px;top:73px;width:61px;height:14px;overflow:hidden"><span class="t" style="left:7px;top:2px;">S</span></div>
<div style="left:651px;top:73px;width:51px;height:14px;overflow:hidden"><span class="t" style="left:7px;top:2px;">71</span></div>
<div style="left:833px;top:73px;width:33px;height:14px;overflow:hidden"><span class="t" style="left:7px;top:2px;">7.29</span></div>
<div style="left:866px;top:73px;width:42px;height:14px;overflow:hidden"><span class="t" style="left:7px;top:2px;">19</span></div>
<div style="left:908px;top:73px;width:15px;height:14px;overflow:hidden"><span class="t" style="left:7px;top:2px;">0</span></div>
<div style="left:0px;top:87px;width:47px;height:14px;overflow:hidden"><span class="t k" style="left:4px;top:2px;">ABC005</span></div>
<div style="left:47px;top:87px;width:29px;height:14px;overflow:hidden"><span class="t" style="left:7px;top:2px;">P</span></div>
<div style="left:76px;top:87px;width:39px;height:14px;overflow:hidden"><span class="t" style="left:7px;top:2px;">11:36</span></div>
<div style="left:115px;top:87px;width:39px;height:14px;overflow:hidden"><span class="t" style="left:7px;top:2px;">11:36</span></div>
<div style="left:154px;top:87px;width:340px;height:14px;overflow:hidden"><span class="t k" style="left:7px;top:2px;">3218, KNOBDALE RD, NASHVILLE, TN</span></div>
<div style="left:523px;top:87px;width:61px;height:14px;overflow:hidden"><span class="t" style="left:7px;top:2px;">S</span></div>
<div style="left:651px;top:87px;width:51px;height:14px;overflow:hidden"><span class="t" style="left:7px;top:2px;">71</span></div>
<div style="left:763px;top:87px;width:70px;height:14px;overflow:hidden"><span class="t k" style="left:7px;top:2px;">AM1</span></div>
<div style="left:833px;top:87px;width:33px;height:14px;overflow:hidden"><span class="t" style="left:7px;top:2px;">7.29</span></div>
<div style="left:866px;top:87px;width:42px;height:14px;overflow:hidden"><span class="t" style="left:7px;top:2px;">19</span></div>
<div style="left:908px;top:87px;width:15px;height:14px;overflow:hidden"><span class="t" style="left:7px;top:2px;">0</span></div>
<div style="left:0px;top:101px;width:47px;height:14px;overflow:hidden"><span class="t k" style="left:4px;top:2px;">ABC005</span></div>
<div style="left:47px;top:101px;width:29px;height:14px;overflow:hidden"><span class="t" style="left:7px;top:2px;">D</span></div>
<div style="left:76px;top:101px;width:39px;height:14px;overflow:hidden"><span class="t" style="left:7px;top:2px;">12:11</span></div>
<div style="left:115px;top:101px;width:39px;height:14px;overflow:hidden"><span class="t" style="left:7px;top:2px;">12:11</span></div>
<div style="left:154px;top:101px;width:340px;height:14px;overflow:hidden"><span class="t k" style="left:7px;top:2px;">CUMBERLAND MANOR NURSING CTR; 4343, HYDES FERRY P</span></div>
<div style="left:523px;top:101px;width:61px;height:14px;overflow:hidden"><span class="t" style="left:7px;top:2px;">S</span></div>
<div style="left:651px;top:101px;width:51px;height:14px;overflow:hidden"><span class="t" style="left:7px;top:2px;">71</span></div>
<div style="left:833px;top:101px;width:33px;height:14px;overflow:hidden"><span class="t" style="left:7px;top:2px;">12...</span></div>
<div style="left:866px;top:101px;width:42px;height:14px;overflow:hidden"><span class="t" style="left:7px;top:2px;">31</span></div>
<div style="left:908px;top:101px;width:15px;height:14px;overflow:hidden"><span class="t" style="left:7px;top:2px;">0</span></div>
</div>
<div class="" style="left:1023px;top:410px;width:17px;height:111px;background:#f0f0f0"></div>
<div class="" style="left:1024px;top:426px;width:15px;height:31px;background:#cdcdcd"></div>
<svg style="left:1027px;top:414px" width="9" height="8" viewBox="0 0 9 8"><path d="M1.400 5.900L4.500 2.600L7.600 5.900" stroke="#606060" stroke-width="2.100" fill="none"/></svg>
<svg style="left:1027px;top:508px" width="9" height="8" viewBox="0 0 9 8"><path d="M1.400 2.100L4.500 5.400L7.600 2.100" stroke="#606060" stroke-width="2.100" fill="none"/></svg>
<div class="" style="left:100px;top:521px;width:923px;height:17px;background:#f0f0f0"></div>
<div class="" style="left:117px;top:522px;width:526px;height:15px;background:#cdcdcd"></div>
<svg style="left:104px;top:524.5px" width="8" height="9" viewBox="0 0 8 9"><path d="M5.900 1.400L2.600 4.500L5.900 7.600" stroke="#606060" stroke-width="2.100" fill="none"/></svg>
<svg style="left:1011px;top:524.5px" width="8" height="9" viewBox="0 0 8 9"><path d="M1.600 1.400L4.900 4.500L1.600 7.600" stroke="#606060" stroke-width="2.100" fill="none"/></svg>
<div class="" style="left:1023px;top:521px;width:17px;height:17px;background:#f0f0f0"></div>
<div class="" style="left:1045px;top:404px;width:1px;height:135px;background:#a0a0a0"></div>
<div class="" style="left:1046px;top:404px;width:1px;height:135px;background:#696969"></div>
<span class="seg" style="left:100px;top:542px;transform:scaleX(.93)">Ready</span>
<svg style="left:1034px;top:545px" width="12" height="12" viewBox="0 0 12 12"><path d="M11 0L0 11M11 4L4 11M11 8L8 11" stroke="#a0a0a0" stroke-width="1.300" fill="none"/></svg>
</body></html>
